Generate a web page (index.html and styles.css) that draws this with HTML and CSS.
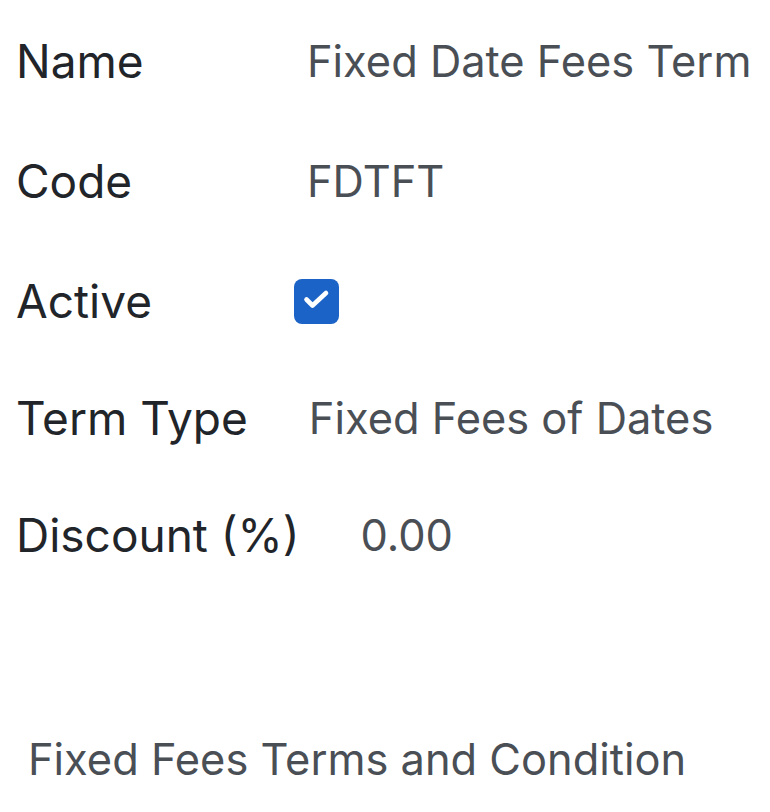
FILE: index.html
```html
<!DOCTYPE html>
<html lang="en">
<head>
  <meta charset="UTF-8" />
  <meta name="viewport" content="width=device-width, initial-scale=1.0"/>
  <title>Payment Term</title>
  <link rel="stylesheet" href="styles.css">
</head>
<body>

  <div class="form">
    <div class="row">
      <div class="label">Name</div>
      <div class="value">Fixed Date Fees Term</div>
    </div>
    <div class="row">
      <div class="label">Code</div>
      <div class="value">FDTFT</div>
    </div>
    <div class="row">
      <div class="label">Active</div>
      <div class="check">
        <svg viewBox="0 0 45 45" width="45" height="45">
          <path d="M12.5 20.5l6 6 13.5-12.5" fill="none" stroke="#fff" stroke-width="4.6" stroke-linecap="round" stroke-linejoin="round"/>
        </svg>
      </div>
    </div>
    <div class="row row-short">
      <div class="label">Term Type</div>
      <div class="value">Fixed Fees of Dates</div>
    </div>
    <div class="row">
      <div class="label">Discount (%)</div>
      <div class="value">0.00</div>
    </div>
  </div>

  <div class="note">Fixed Fees Terms and Condition</div>

</body>
</html>
```

FILE: styles.css
```css
body {
  background-color: white;
  font-family: Inter, "Noto Sans", sans-serif;
  margin: 0;
  padding: 0;
}

.form {
  padding: 1px 0 0 16px;
}

.row {
  display: flex;
  align-items: center;
  height: 120px;
}

.row-short {
  height: 114px;
}

.label {
  flex: 0 0 auto;
  min-width: 278px;
  padding-right: 48px;
  box-sizing: border-box;
  font-size: 46px;
  color: #212529;
}

.value {
  padding-left: 13px;
  font-size: 43.4px;
  color: #4a4f56;
}

.check {
  width: 45px;
  height: 45px;
  background-color: #1b63c6;
  border-radius: 8px;
}

.check svg {
  display: block;
}

.note {
  margin-top: 138px;
  padding-left: 28px;
  font-size: 43.4px;
  color: #4a4f56;
}
```
